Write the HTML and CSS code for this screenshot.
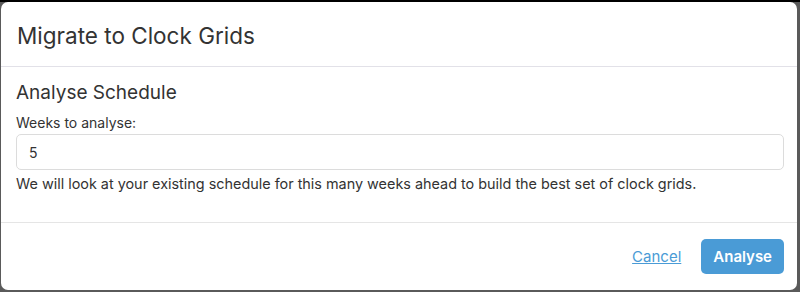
FILE: index.html
```html
<!DOCTYPE html>
<html lang="en">

<head>
  <meta charset="UTF-8" />
  <meta name="viewport" content="width=device-width, initial-scale=1.0" />
  <link rel="stylesheet" href="styles.css">
</head>

<body>
  <div class="backdrop">
    <div class="modal">
      <div class="modal-header">
        <h4 class="modal-title">Migrate to Clock Grids</h4>
      </div>
      <div class="modal-body">
        <h5 class="section-title">Analyse Schedule</h5>
        <label class="field-label" for="weeks">Weeks to analyse:</label>
        <input class="field-input" id="weeks" type="text" value="5" />
        <p class="help">We will look at your existing schedule for this many weeks ahead to build the best set of clock grids.</p>
      </div>
      <div class="modal-footer">
        <a class="link" href="#">Cancel</a>
        <button class="btn-primary" type="button">Analyse</button>
      </div>
    </div>
  </div>
</body>

</html>
```

FILE: styles.css
```css
* {
  box-sizing: border-box;
}

html,
body {
  margin: 0;
  height: 100%;
}

body {
  background-color: #5a5a5a;
  border-top: 2px solid #000;
  font-family: Inter, "Noto Sans", sans-serif;
  color: #333;
}

.backdrop {
  padding: 0 3px 2px 1px;
  height: 100%;
}

.modal {
  display: flex;
  flex-direction: column;
  height: 100%;
  background-color: #fff;
  border-radius: 7px;
}

.modal-header {
  height: 65px;
  padding: 2px 16px 0;
  display: flex;
  align-items: center;
  border-bottom: 1px solid #e2e1e8;
}

.modal-title {
  margin: 0;
  font-size: 22.5px;
  font-weight: 400;
  color: #333;
}

.modal-body {
  flex: 1;
  padding: 15px 13px 0 15px;
  border-bottom: 1px solid #e5e5e5;
}

.section-title {
  margin: 0 0 10px;
  font-size: 19px;
  font-weight: 400;
  line-height: 22px;
}

.field-label {
  display: block;
  font-size: 14px;
  line-height: 18px;
  margin-bottom: 2px;
}

.field-input {
  display: block;
  width: 100%;
  height: 36px;
  padding: 0 12px;
  border: 1px solid #dcdcdc;
  border-radius: 5px;
  font-family: inherit;
  font-size: 14px;
  color: #333;
}

.help {
  margin: 5px 0 0;
  font-size: 14.4px;
  line-height: 18px;
}

.modal-footer {
  height: 67px;
  padding: 0 13px 0 15px;
  display: flex;
  align-items: center;
  justify-content: flex-end;
  gap: 20px;
}

.link {
  color: #4a9bd6;
  font-size: 15px;
}

.btn-primary {
  height: 35px;
  padding: 0 12px;
  background-color: #4a9bd6;
  border: none;
  border-radius: 5px;
  color: #fff;
  font-family: inherit;
  font-size: 15px;
  font-weight: 600;
}
```
